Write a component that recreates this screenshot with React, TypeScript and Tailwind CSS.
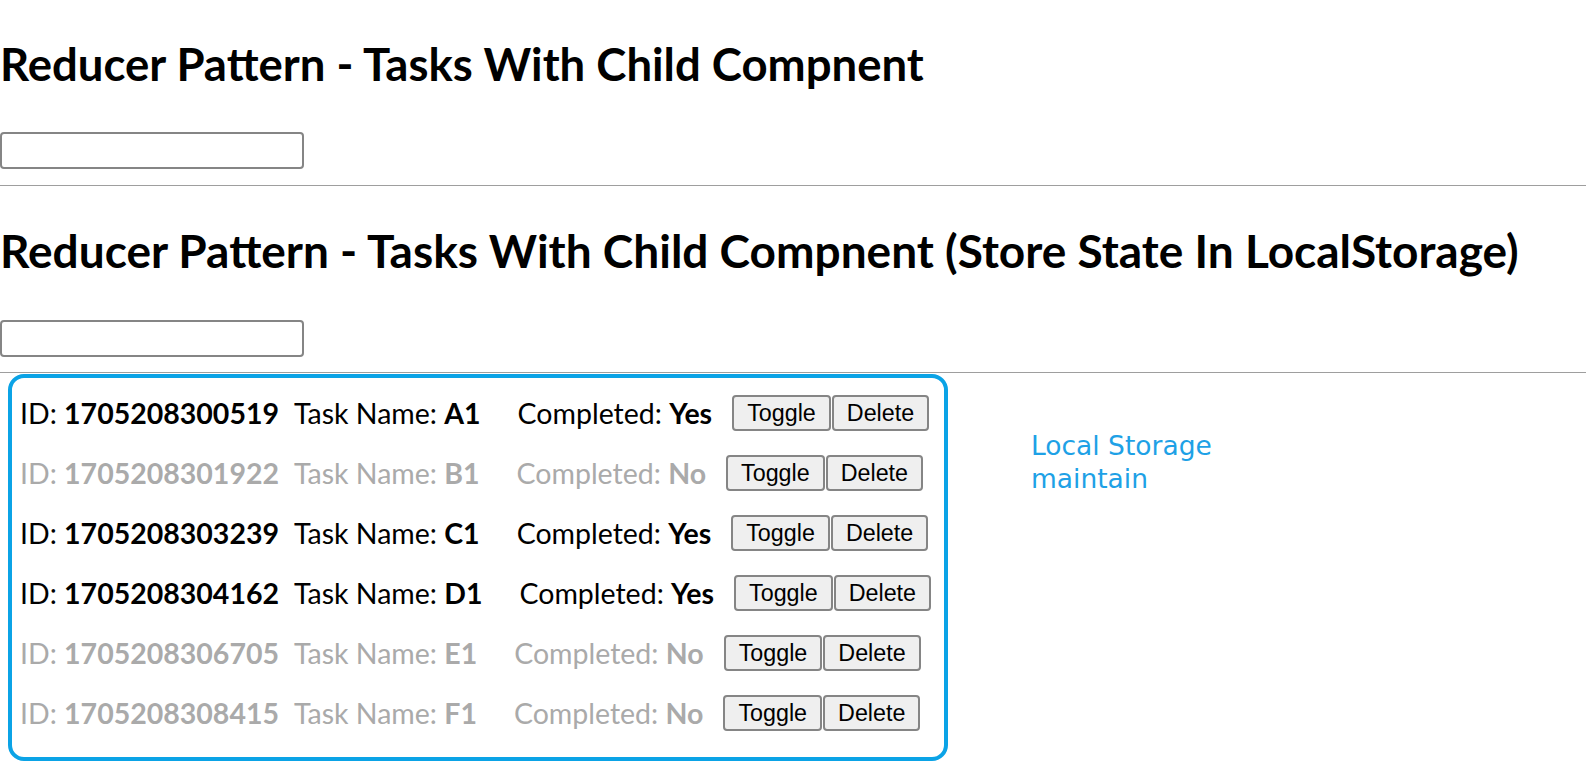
import React from "react";

type Task = { id: string; name: string; done: boolean };

const tasks: Task[] = [
  { id: "1705208300519", name: "A1", done: true },
  { id: "1705208301922", name: "B1", done: false },
  { id: "1705208303239", name: "C1", done: true },
  { id: "1705208304162", name: "D1", done: true },
  { id: "1705208306705", name: "E1", done: false },
  { id: "1705208308415", name: "F1", done: false },
];

function Row({ t }: { t: Task }) {
  return (
    <div
      className={`flex h-[60px] items-center whitespace-nowrap text-[28.5px] leading-[38px] ${
        t.done ? "text-black" : "text-[#aaaaaa]"
      }`}
    >
      <span>
        ID: <b>{t.id}</b>
      </span>
      <span className="ml-[15px]">
        Task Name: <b>{t.name}</b>
      </span>
      <span className="ml-[37px]">
        Completed: <b>{t.done ? "Yes" : "No"}</b>
      </span>
      <div className="ml-[20px] flex font-['Liberation_Sans',Arial,sans-serif] text-[23.3px] leading-[28px] text-black">
        <button className="h-[36px] rounded-[4px] border-2 border-[#858585] bg-[#efefef] px-[13px]">Toggle</button>
        <button className="ml-[1px] h-[36px] rounded-[4px] border-2 border-[#858585] bg-[#efefef] px-[13px]">
          Delete
        </button>
      </div>
    </div>
  );
}

export default function App() {
  return (
    <div className="min-h-screen bg-white font-['Lato',sans-serif] text-black">
      <h1 className="pt-[34px] text-[45.5px] font-bold leading-[60px] whitespace-nowrap">
        Reducer Pattern - Tasks With Child Compnent
      </h1>
      <input className="mt-[38px] block h-[37px] w-[304px] rounded-[4px] border-2 border-[#858585]" />
      <hr className="mt-[16px] border-[#9e9e9e]" />
      <h1 className="mt-[35px] text-[46px] font-bold leading-[60px] whitespace-nowrap">
        Reducer Pattern - Tasks With Child Compnent (Store State In LocalStorage)
      </h1>
      <input className="mt-[39px] block h-[37px] w-[304px] rounded-[4px] border-2 border-[#858585]" />
      <hr className="mt-[15px] border-[#9e9e9e]" />
      <div className="mt-[1px] flex items-start">
        <div className="ml-[8px] w-[940px] rounded-[16px] border-4 border-[#0ba3e6] pb-[14px] pl-[8px] pt-[5px]">
          {tasks.map((t) => (
            <Row key={t.id} t={t} />
          ))}
        </div>
        <div className="ml-[83px] mt-[55px] w-[220px] font-['DejaVu_Sans',Verdana,sans-serif] text-[26.5px] leading-[33px] text-[#1ea1e6]">
          Local Storage maintain
        </div>
      </div>
    </div>
  );
}
